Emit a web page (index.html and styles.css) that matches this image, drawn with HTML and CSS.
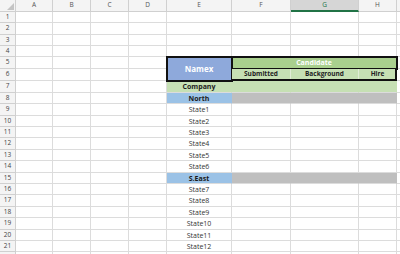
FILE: index.html
```html
<!DOCTYPE html>
<html lang="en">
<head>
    <meta charset="UTF-8">
    <title>Candidate Tracker</title>
    <link rel="stylesheet" href="styles.css">
</head>
<body>

    <!-- Worksheet -->
    <table class="sheet">
        <colgroup>
            <col class="col-head">
            <col class="col-a"><col class="col-b"><col class="col-c"><col class="col-d">
            <col class="col-e"><col class="col-f"><col class="col-g"><col class="col-h">
            <col class="col-i">
        </colgroup>
        <tbody>

        <!-- Column letters -->
        <tr class="letters">
            <th class="corner"><span class="corner-mark"></span></th>
            <th>A</th><th>B</th><th>C</th><th>D</th><th>E</th><th>F</th><th class="selected">G</th><th>H</th><th></th>
        </tr>

        <tr><th>1</th><td></td><td></td><td></td><td></td><td></td><td></td><td></td><td></td><td></td></tr>
        <tr><th>2</th><td></td><td></td><td></td><td></td><td></td><td></td><td></td><td></td><td></td></tr>
        <tr><th>3</th><td></td><td></td><td></td><td></td><td></td><td></td><td></td><td></td><td></td></tr>
        <tr class="short"><th>4</th><td></td><td></td><td></td><td></td><td></td><td></td><td></td><td></td><td></td></tr>

        <!-- Header block -->
        <tr class="band">
            <th>5</th><td></td><td></td><td></td><td></td>
            <td class="namex" rowspan="2">Namex</td>
            <td class="candidate" colspan="3">Candidate</td>
            <td></td>
        </tr>
        <tr class="band">
            <th>6</th><td></td><td></td><td></td><td></td>
            <td class="sub">Submitted</td><td class="sub">Background</td><td class="sub last">Hire</td>
            <td></td>
        </tr>

        <tr><th>7</th><td></td><td></td><td></td><td></td><td class="company">Company</td><td class="company"></td><td class="company"></td><td class="company"></td><td></td></tr>
        <tr><th>8</th><td></td><td></td><td></td><td></td><td class="region">North</td><td class="blank"></td><td class="blank"></td><td class="blank"></td><td></td></tr>
        <tr><th>9</th><td></td><td></td><td></td><td></td><td class="state">State1</td><td></td><td></td><td></td><td></td></tr>
        <tr><th>10</th><td></td><td></td><td></td><td></td><td class="state">State2</td><td></td><td></td><td></td><td></td></tr>
        <tr><th>11</th><td></td><td></td><td></td><td></td><td class="state">State3</td><td></td><td></td><td></td><td></td></tr>
        <tr><th>12</th><td></td><td></td><td></td><td></td><td class="state">State4</td><td></td><td></td><td></td><td></td></tr>
        <tr><th>13</th><td></td><td></td><td></td><td></td><td class="state">State5</td><td></td><td></td><td></td><td></td></tr>
        <tr><th>14</th><td></td><td></td><td></td><td></td><td class="state">State6</td><td></td><td></td><td></td><td></td></tr>
        <tr><th>15</th><td></td><td></td><td></td><td></td><td class="region">S.East</td><td class="blank"></td><td class="blank"></td><td class="blank"></td><td></td></tr>
        <tr><th>16</th><td></td><td></td><td></td><td></td><td class="state">State7</td><td></td><td></td><td></td><td></td></tr>
        <tr><th>17</th><td></td><td></td><td></td><td></td><td class="state">State8</td><td></td><td></td><td></td><td></td></tr>
        <tr><th>18</th><td></td><td></td><td></td><td></td><td class="state">State9</td><td></td><td></td><td></td><td></td></tr>
        <tr><th>19</th><td></td><td></td><td></td><td></td><td class="state">State10</td><td></td><td></td><td></td><td></td></tr>
        <tr><th>20</th><td></td><td></td><td></td><td></td><td class="state">State11</td><td></td><td></td><td></td><td></td></tr>
        <tr><th>21</th><td></td><td></td><td></td><td></td><td class="state">State12</td><td></td><td></td><td></td><td></td></tr>
        <tr><th></th><td></td><td></td><td></td><td></td><td></td><td></td><td></td><td></td><td></td></tr>
        </tbody>
    </table>

</body>
</html>
```

FILE: styles.css
```css
/* Page */
body {
    margin: 0;
    background-color: white;
    overflow: hidden;
    font-family: "Open Sans", "Liberation Sans", sans-serif;
}

/* Grid of cells */
.sheet {
    table-layout: fixed;
    border-collapse: separate;
    border-spacing: 0;
    width: 420px;
}

.col-head { width: 16px; }
.col-a { width: 37px; }
.col-b { width: 38px; }
.col-c { width: 38px; }
.col-d { width: 38px; }
.col-e { width: 65px; }
.col-f { width: 59px; }
.col-g { width: 68px; }
.col-h { width: 38px; }
.col-i { width: 23px; }

/* Rows alternate 11/12px so five rows take 57px */
.sheet tr {
    height: 11px;
}

.sheet tr:nth-child(5n+3),
.sheet tr:nth-child(5n) {
    height: 12px;
}

/* Two-row header band gets a bit more room */
.sheet tr.short {
    height: 11px;
}

.sheet tr.band {
    height: 12px;
}

.sheet td,
.sheet th {
    padding: 0;
    border-right: 1px solid #dcdcdc;
    border-bottom: 1px solid #dcdcdc;
    font-size: 7px;
    line-height: 1;
    text-align: center;
    white-space: nowrap;
    box-sizing: border-box;
}

/* Row numbers and column letters */
.sheet th {
    background-color: #f4f4f4;
    color: #444;
    font-size: 6.5px;
    font-weight: normal;
    border-color: #d0d0d0;
}

.sheet tr.letters {
    height: 12px;
}

.letters th {
    color: #555;
}

.sheet .letters .selected {
    background-color: #d6d6d6;
    color: #217346;
    border-bottom: 2px solid #217346;
}

.corner {
    position: relative;
}

.corner-mark {
    position: absolute;
    right: 1px;
    bottom: 1px;
    width: 0;
    height: 0;
    border-left: 7px solid transparent;
    border-bottom: 7px solid #c4c4c4;
}

/* Header block: thick borders sit across the gridlines */
.sheet .namex {
    background-color: #8ea9db;
    color: white;
    font-weight: bold;
    font-size: 8px;
    outline: 2px solid #111;
    outline-offset: -1px;
}

.sheet .candidate {
    background-color: #a9d08e;
    color: white;
    font-weight: bold;
    font-size: 7px;
    outline: 2px solid #111;
    outline-offset: -1px;
}

.sheet .sub {
    position: relative;
    background-color: #c6e0b4;
    color: #222;
    font-size: 6.5px;
    font-weight: bold;
    border-right-color: #e0ecd6;
}

.sub::after {
    content: "";
    position: absolute;
    left: -1px;
    right: -1px;
    bottom: -1px;
    height: 2px;
    background-color: #111;
}

.sub.last::before {
    content: "";
    position: absolute;
    top: -1px;
    right: -1px;
    bottom: -1px;
    width: 2px;
    background-color: #111;
}

/* Body rows */
.sheet .company {
    background-color: #c6e0b4;
    border-right-color: #c6e0b4;
    color: #222;
    font-weight: bold;
}

.sheet .region {
    background-color: #9bc2e6;
    border-right-color: #9bc2e6;
    color: #1a1a1a;
    font-weight: bold;
}

.sheet .blank {
    background-color: #bfbfbf;
    border-right-color: #bfbfbf;
}

.state {
    color: #333;
}
```
